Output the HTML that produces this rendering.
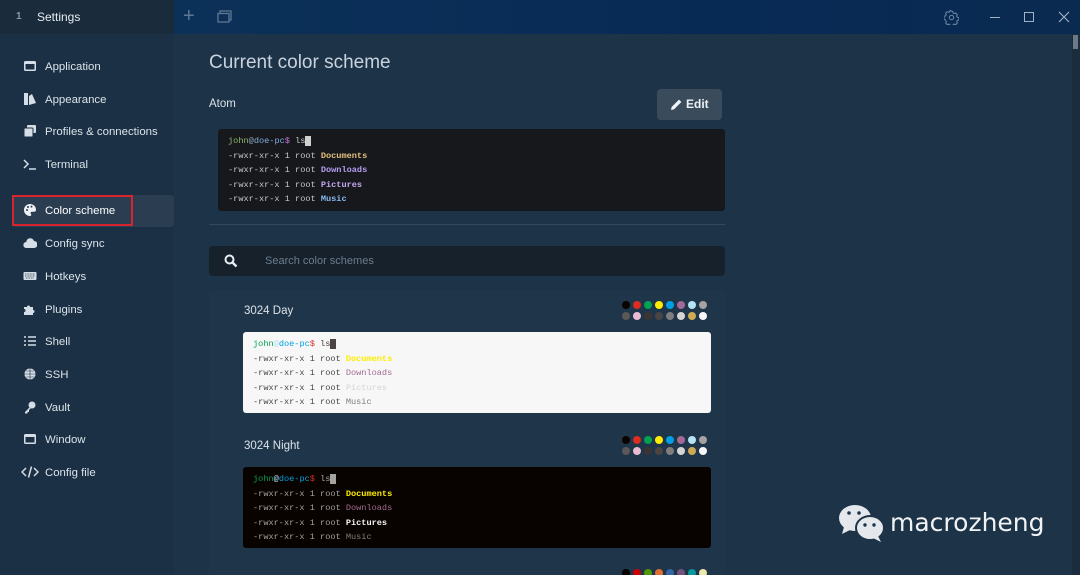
<!DOCTYPE html>
<html><head><meta charset="utf-8"><style>
*{margin:0;padding:0;box-sizing:border-box}
html,body{width:1080px;height:575px;overflow:hidden}
body{background:#1d3348;font-family:"Liberation Sans",sans-serif;color:#dfe6ee;position:relative}
.a{position:absolute}
.side{left:0;top:0;width:174px;height:575px;background:#1b3044}
.top1{left:0;top:0;width:174px;height:34px;background:#1a2b3c}
.tabbar{left:174px;top:0;width:906px;height:34px;background:linear-gradient(90deg,#0c3158,#072a55 60%,#0a2a50)}
.it{position:absolute;left:45px;font-size:11.4px;color:#dbe3ea;line-height:14px}
.ic{position:absolute;left:23px;width:14px;height:14px}
.term{font-family:"Liberation Mono",monospace;font-size:8.6px;line-height:14.6px;padding:5px 10px;border-radius:3px}
.dots{position:absolute;width:90px;display:flex;flex-wrap:wrap}
.dots i{display:block;width:8px;height:8px;border-radius:50%;margin:0 3px 3px 0}
b{font-weight:bold}
</style></head><body>
<div class="a side"></div>
<div class="a top1"></div>
<div class="a tabbar"></div>
<div class="a" style="left:16px;top:11px;font-size:10px;color:#8898a8;font-weight:bold">1</div>
<div class="a" style="left:37px;top:10px;font-size:12px;color:#e6ecf2">Settings</div>
<div class="a" style="left:183px;top:5px;font-size:20px;color:#5d7892;font-weight:300">+</div>
<svg class="a" style="left:217px;top:10px" width="15" height="13"><rect x="3" y="1" width="11" height="9" fill="none" stroke="#5d7892" stroke-width="1.3"/><rect x="1" y="3.5" width="11" height="8.5" fill="#0b2f56" stroke="#5d7892" stroke-width="1.3"/></svg>
<svg class="a" style="left:944px;top:10px" width="15" height="15" viewBox="0 0 24 24"><path d="M12 2l2 .3.6 2.6 1.7.9 2.5-1 2.5 2.5-1 2.5.9 1.7 2.6.6v4l-2.6.6-.9 1.7 1 2.5-2.5 2.5-2.5-1-1.7.9-.6 2.6h-4l-.6-2.6-1.7-.9-2.5 1-2.5-2.5 1-2.5-.9-1.7L0 14v-4l2.6-.6.9-1.7-1-2.5L5 2.7l2.5 1 1.7-.9L9.8.3z" fill="none" stroke="#6f8aa6" stroke-width="1.6"/><circle cx="12" cy="12" r="3.5" fill="none" stroke="#6f8aa6" stroke-width="1.6"/></svg>
<div class="a" style="left:990px;top:17px;width:10px;height:1px;background:#9fb2c6"></div>
<div class="a" style="left:1024px;top:12px;width:10px;height:10px;border:1.3px solid #9fb2c6"></div>
<svg class="a" style="left:1058px;top:11px" width="12" height="12"><path d="M1 1L11 11M11 1L1 11" stroke="#9fb2c6" stroke-width="1.2"/></svg>
<div class="a" style="left:1072px;top:34px;width:8px;height:541px;background:#1b2c3d"></div>
<div class="a" style="left:1073px;top:35px;width:5px;height:14px;background:#6c7a88"></div>

<!-- sidebar -->
<div class="a" style="left:12px;top:195px;width:162px;height:32px;background:#2a3d51;border-radius:3px"></div>
<div class="a" style="left:12px;top:195px;width:121px;height:31px;border:2px solid #d8242c"></div>
<svg class="ic" style="top:59px" viewBox="0 0 14 14"><rect x="1" y="2" width="12" height="10" rx="1.5" fill="#d5dde6"/><rect x="2.5" y="5" width="9" height="5.5" fill="#1b3044"/></svg>
<div class="it" style="top:60px">Application</div>
<svg class="ic" style="top:92px" viewBox="0 0 14 14"><rect x="1" y="1" width="4" height="12" fill="#d5dde6"/><path d="M6 4l3-2 4 9-7 2z" fill="#d5dde6"/></svg>
<div class="it" style="top:93px">Appearance</div>
<svg class="ic" style="top:124px" viewBox="0 0 14 14"><rect x="4" y="1" width="9" height="8" rx="1" fill="#d5dde6"/><rect x="1" y="4" width="9" height="9" rx="1" fill="#d5dde6" stroke="#1b3044"/></svg>
<div class="it" style="top:125px">Profiles &amp; connections</div>
<svg class="ic" style="top:157px" viewBox="0 0 14 14"><path d="M1 3l4 4-4 4M6 12h7" fill="none" stroke="#d5dde6" stroke-width="1.5"/></svg>
<div class="it" style="top:158px">Terminal</div>
<svg class="ic" style="top:203px" viewBox="0 0 14 14"><path d="M7 1a6 6 0 1 0 0 12c1.5 0 1.5-1.5.8-2.2-.7-.8 0-2 1.2-2H11a2 2 0 0 0 2-2C13 3.5 10.5 1 7 1z" fill="#eef2f6"/><circle cx="4" cy="7" r="1" fill="#2a3d51"/><circle cx="5" cy="4" r="1" fill="#2a3d51"/><circle cx="8.5" cy="3.6" r="1" fill="#2a3d51"/></svg>
<div class="it" style="top:204px;color:#fff">Color scheme</div>
<svg class="ic" style="top:236px" viewBox="0 0 14 14"><path d="M3.5 12a3 3 0 0 1-.3-6A4 4 0 0 1 11 5a3.5 3.5 0 0 1 0 7z" fill="#d5dde6"/></svg>
<div class="it" style="top:237px">Config sync</div>
<svg class="ic" style="top:269px" viewBox="0 0 14 14"><rect x="0.5" y="3" width="13" height="8" rx="1" fill="#d5dde6"/><path d="M2 5h10M2 7h10M3 9h8" stroke="#1b3044" stroke-width=".7" stroke-dasharray="1 .6"/></svg>
<div class="it" style="top:270px">Hotkeys</div>
<svg class="ic" style="top:302px" viewBox="0 0 14 14"><path d="M1 5h3a1.5 1.5 0 1 1 3 0h3v3a1.5 1.5 0 1 1 0 3v2H1v-3a1.5 1.5 0 1 0 0-3z" fill="#d5dde6"/></svg>
<div class="it" style="top:303px">Plugins</div>
<svg class="ic" style="top:334px" viewBox="0 0 14 14"><path d="M1 3h2M1 7h2M1 11h2M5 3h8M5 7h8M5 11h8" stroke="#d5dde6" stroke-width="1.6"/></svg>
<div class="it" style="top:335px">Shell</div>
<svg class="ic" style="top:367px" viewBox="0 0 14 14"><circle cx="7" cy="7" r="5.5" fill="#d5dde6"/><path d="M1.5 7h11M7 1.5v11M3 4h8M3 10h8" stroke="#1b3044" stroke-width=".6"/></svg>
<div class="it" style="top:368px">SSH</div>
<svg class="ic" style="top:400px" viewBox="0 0 14 14"><circle cx="9" cy="5" r="3.5" fill="#d5dde6"/><path d="M7 7l-5 5v1.5h2.5v-1.5H6V10l2-2" fill="#d5dde6"/></svg>
<div class="it" style="top:401px">Vault</div>
<svg class="ic" style="top:432px" viewBox="0 0 14 14"><rect x="1" y="2" width="12" height="10" rx="1.5" fill="#d5dde6"/><rect x="2.5" y="5" width="9" height="5.5" fill="#1b3044"/></svg>
<div class="it" style="top:433px">Window</div>
<svg class="a" style="left:21px;top:465px" width="18" height="14" viewBox="0 0 18 14"><path d="M5 3L1 7l4 4M13 3l4 4-4 4M10.5 1.5l-3 11" fill="none" stroke="#d5dde6" stroke-width="1.5"/></svg>
<div class="it" style="top:466px">Config file</div>

<!-- main -->
<div class="a" style="left:209px;top:52px;font-size:19px;color:#c9d3dd;font-weight:300">Current color scheme</div>
<div class="a" style="left:209px;top:98px;font-size:11.5px;color:#dbe3ea">Atom</div>
<div class="a" style="left:657px;top:89px;width:65px;height:31px;background:#3a4b5c;border-radius:4px;font-size:12px;font-weight:bold;color:#eef2f6;padding:8px 0 0 29px">Edit</div>
<svg class="a" style="left:670px;top:98px" width="13" height="13" viewBox="0 0 13 13"><path d="M1 12l.6-3L9 1.6 11.4 4 4 11.4z" fill="#eef2f6"/></svg>
<div class="a term" style="left:218px;top:129px;width:507px;height:82px;background:#16181c;color:#c3c8cf">
<div><span style="color:#8fba6e">john</span><span style="color:#8ea0b5">@</span><span style="color:#82aee0">doe-pc</span><span style="color:#c678dd">$</span> ls<span style="background:#d0d0d0">&nbsp;</span></div>
<div>-rwxr-xr-x 1 root <b style="color:#e5c07b">Documents</b></div>
<div>-rwxr-xr-x 1 root <b style="color:#b69cf0">Downloads</b></div>
<div>-rwxr-xr-x 1 root <b style="color:#c6a7f0">Pictures</b></div>
<div>-rwxr-xr-x 1 root <b style="color:#87b9f0">Music</b></div>
</div>
<div class="a" style="left:209px;top:224px;width:516px;height:1px;background:#33495e"></div>
<div class="a" style="left:209px;top:246px;width:516px;height:30px;background:#16212c;border-radius:4px"></div>
<svg class="a" style="left:224px;top:254px" width="14" height="14" viewBox="0 0 14 14"><circle cx="5.5" cy="5.5" r="4" fill="none" stroke="#e8edf2" stroke-width="2"/><path d="M8.5 8.5l4 4" stroke="#e8edf2" stroke-width="2.4"/></svg>
<div class="a" style="left:265px;top:255px;font-size:11px;color:#6c7d8e">Search color schemes</div>
<div class="a" style="left:209px;top:290px;width:516px;height:285px;background:#1f354a"></div>

<div class="a" style="left:244px;top:305px;font-size:11.5px;color:#dbe3ea">3024 Day</div>
<div class="dots" style="left:622px;top:301px"><i style="background:#090300"></i><i style="background:#db2d20"></i><i style="background:#01a252"></i><i style="background:#fded02"></i><i style="background:#01a0e4"></i><i style="background:#a16a94"></i><i style="background:#b5e4f4"></i><i style="background:#a5a2a2"></i><i style="background:#5c5855"></i><i style="background:#e8bbd0"></i><i style="background:#3a3432"></i><i style="background:#4a4543"></i><i style="background:#807d7c"></i><i style="background:#d6d5d4"></i><i style="background:#cdab53"></i><i style="background:#f7f7f7"></i></div>
<div class="a term" style="left:243px;top:332px;width:468px;height:81px;background:#f7f7f7;color:#4a4543">
<div><span style="color:#01a252">john</span><span style="color:#b5e4f4">@</span><span style="color:#01a0e4">doe-pc</span><span style="color:#db2d20">$</span> ls<span style="background:#4a4543">&nbsp;</span></div>
<div>-rwxr-xr-x 1 root <b style="color:#fded02">Documents</b></div>
<div>-rwxr-xr-x 1 root <span style="color:#a16a94">Downloads</span></div>
<div>-rwxr-xr-x 1 root <span style="color:#d6d5d4">Pictures</span></div>
<div>-rwxr-xr-x 1 root <span style="color:#807d7c">Music</span></div>
</div>

<div class="a" style="left:244px;top:440px;font-size:11.5px;color:#dbe3ea">3024 Night</div>
<div class="dots" style="left:622px;top:436px"><i style="background:#090300"></i><i style="background:#db2d20"></i><i style="background:#01a252"></i><i style="background:#fded02"></i><i style="background:#01a0e4"></i><i style="background:#a16a94"></i><i style="background:#b5e4f4"></i><i style="background:#a5a2a2"></i><i style="background:#5c5855"></i><i style="background:#e8bbd0"></i><i style="background:#3a3432"></i><i style="background:#4a4543"></i><i style="background:#807d7c"></i><i style="background:#d6d5d4"></i><i style="background:#cdab53"></i><i style="background:#f7f7f7"></i></div>
<div class="a term" style="left:243px;top:467px;width:468px;height:81px;background:#090300;color:#a5a2a2">
<div><span style="color:#01a252">john</span><span style="color:#b5e4f4">@</span><span style="color:#01a0e4">doe-pc</span><span style="color:#db2d20">$</span> ls<span style="background:#a5a2a2">&nbsp;</span></div>
<div>-rwxr-xr-x 1 root <b style="color:#fded02">Documents</b></div>
<div>-rwxr-xr-x 1 root <span style="color:#a16a94">Downloads</span></div>
<div>-rwxr-xr-x 1 root <b style="color:#f7f7f7">Pictures</b></div>
<div>-rwxr-xr-x 1 root <span style="color:#807d7c">Music</span></div>
</div>
<div class="dots" style="left:622px;top:569px"><i style="background:#000"></i><i style="background:#c00"></i><i style="background:#4e9a06"></i><i style="background:#e07030"></i><i style="background:#3465a4"></i><i style="background:#75507b"></i><i style="background:#06989a"></i><i style="background:#eee8aa"></i></div>

<!-- watermark -->
<svg class="a" style="left:838px;top:503px" width="48" height="40" viewBox="0 0 48 40"><ellipse cx="17" cy="15" rx="16" ry="13" fill="#e4e8ec"/><path d="M6 24l-2 7 8-4z" fill="#e4e8ec"/><ellipse cx="32" cy="25" rx="14" ry="12" fill="#e4e8ec" stroke="#1d3348" stroke-width="2"/><path d="M40 33l3 6-8-4z" fill="#e4e8ec"/><circle cx="11" cy="10" r="1.8" fill="#1d3348"/><circle cx="21" cy="10" r="1.8" fill="#1d3348"/><circle cx="27" cy="22" r="1.7" fill="#1d3348"/><circle cx="36" cy="22" r="1.7" fill="#1d3348"/></svg>
<div class="a" style="left:890px;top:508px;font-size:25px;color:#f0f3f6;font-family:'DejaVu Sans',sans-serif">macrozheng</div>
</body></html>
